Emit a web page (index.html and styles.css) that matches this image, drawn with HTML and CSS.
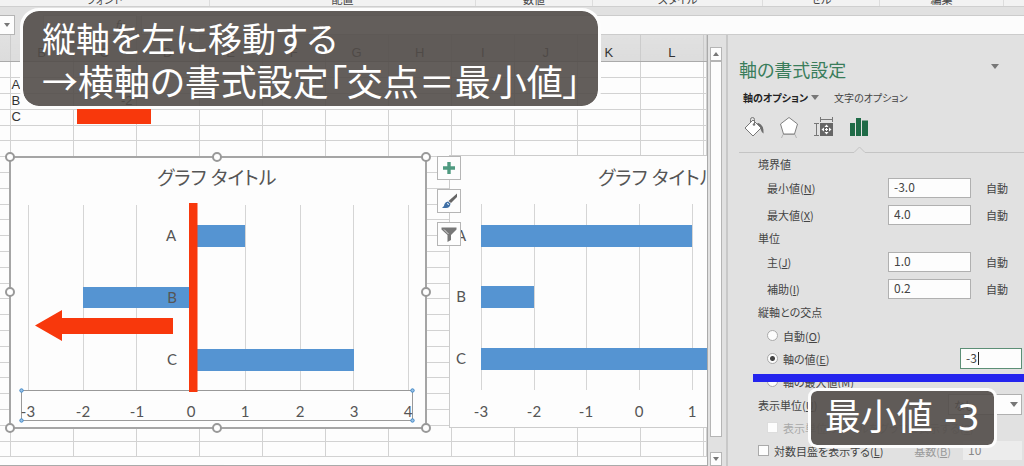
FILE: index.html
```
<!DOCTYPE html>
<html lang="ja">
<head>
    <meta charset="UTF-8">
    <title>軸の書式設定</title>
    <link rel="stylesheet" href="styles.css">
</head>
<body>

<div class="ribbon">
    <span>フォント</span>
    <span>配置</span>
    <span>数値</span>
    <span>スタイル</span>
    <span>セル</span>
    <span>編集</span>
</div>

<div class="formula-bar">
    <button class="name-box" aria-label="名前ボックス"><i class="arrow-down"></i></button>
    <div class="fx-box">fx</div>
    <input class="formula-input" type="text" aria-label="数式バー">
</div>

<div class="workspace">
    <div class="sheet">
        <table class="cells">
            <colgroup id="cols"></colgroup>
            <thead><tr id="head"></tr></thead>
            <tbody id="rows"></tbody>
        </table>
        <div class="red-cell"></div>

        <!-- right chart -->
        <svg class="chart chart-right" width="267" height="285" viewBox="441 150 267 285">
            <rect class="chart-bg" x="449.5" y="155.5" width="300" height="272"/>
            <path class="grid" d="M481.5 204V390M534.5 204V390M586.5 204V390M639.5 204V390M692.5 204V390"/>
            <text class="chart-title" x="598" y="185">グラフ タイトル</text>
            <rect class="bar" x="481" y="225" width="211" height="22"/>
            <rect class="bar" x="481" y="286" width="53" height="22"/>
            <rect class="bar" x="481" y="348" width="240" height="22"/>
            <text x="461" y="241">A</text>
            <text x="461" y="302">B</text>
            <text x="461" y="364">C</text>
            <text x="481" y="417">-3</text>
            <text x="534" y="417">-2</text>
            <text x="586" y="417">-1</text>
            <text x="639" y="417">0</text>
            <text x="692" y="417">1</text>
        </svg>

        <!-- left chart, selected -->
        <svg class="chart chart-left" width="436" height="285" viewBox="0 150 436 285">
            <rect class="chart-bg selected" x="10" y="157" width="416" height="271"/>
            <path class="grid" d="M28.5 205V390M83.5 205V390M136.5 205V390M245.5 205V390M300.5 205V390M353.5 205V390M408.5 205V390"/>
            <text class="chart-title" x="157" y="185">グラフ タイトル</text>
            <rect class="bar" x="193" y="225" width="52" height="22"/>
            <rect class="bar" x="83" y="287" width="110" height="21"/>
            <rect class="bar" x="193" y="349" width="161" height="22"/>
            <text x="171" y="241">A</text>
            <text x="172" y="303">B</text>
            <text x="172" y="365">C</text>
            <rect class="axis-box" x="21.5" y="390.5" width="391" height="30"/>
            <text x="28" y="417">-3</text>
            <text x="83" y="417">-2</text>
            <text x="137" y="417">-1</text>
            <text x="191" y="417">0</text>
            <text x="245" y="417">1</text>
            <text x="300" y="417">2</text>
            <text x="354" y="417">3</text>
            <text x="408" y="417">4</text>
            <g class="axis-handle">
                <circle cx="21.5" cy="390.5" r="1.7"/><circle cx="412.5" cy="390.5" r="1.7"/>
                <circle cx="21.5" cy="420.5" r="1.7"/><circle cx="412.5" cy="420.5" r="1.7"/>
            </g>
            <g class="handle">
                <circle cx="10" cy="157" r="4"/><circle cx="217" cy="157" r="4"/><circle cx="426" cy="157" r="4"/>
                <circle cx="10" cy="292" r="4"/><circle cx="426" cy="292" r="4"/>
                <circle cx="10" cy="428" r="4"/><circle cx="217" cy="428" r="4"/><circle cx="426" cy="428" r="4"/>
            </g>
            <rect class="red" x="189" y="203" width="8.5" height="189"/>
            <path class="red" d="M35 325.5L62 310V318H173V334H62V341Z"/>
        </svg>

        <div class="chart-tools">
            <button aria-label="グラフ要素">
                <svg width="22" height="22"><path d="M11 5V17M5 11H17" stroke="#4f9a80" stroke-width="3.4"/></svg>
            </button>
            <button aria-label="グラフ スタイル">
                <svg width="22" height="22">
                    <path d="M19 3.5V7L13 13L10.500 11Z" fill="#666"/>
                    <path d="M10 11.500L12.500 13.500Q12 18 8 18H4Q6.500 16.500 6.500 14Q7.500 11.500 10 11.500Z" fill="#3f6fa5"/>
                    <path d="M9 13.500L11 14.500" stroke="#fff"/>
                </svg>
            </button>
            <button aria-label="グラフ フィルター">
                <svg width="22" height="22"><path d="M3.500 4.500H18.500V6.500L13 12V17L9.500 19V12L3.500 6.500Z" fill="#777"/><path d="M6 6.500L10.500 11" stroke="#ddd"/></svg>
            </button>
        </div>
        <div class="sheet-tab"></div>
    </div>

    <div class="scrollbar">
        <button aria-label="上へ"><i class="arrow-up"></i></button>
        <div class="thumb"></div>
        <button aria-label="下へ"><i class="arrow-down"></i></button>
    </div>

    <form class="panel">
        <div class="panel-head">
            <h2>軸の書式設定</h2>
            <i class="arrow-down big"></i>
        </div>
        <div class="tabs">
            <b>軸のオプション</b>
            <i class="arrow-down big"></i>
            <span>文字のオプション</span>
        </div>
        <div class="icons">
            <svg width="22" height="22">
                <path d="M15.500 7Q21 9 20.500 17.500Q18.500 16.500 17.500 13L13 8Z" fill="#6d6d6d"/>
                <path d="M10 4L18 12L10 20L2 12Z" fill="#fff" stroke="#777"/>
                <path d="M7.500 7V3.500Q7.500 1.500 9.500 1.500T11.500 3.500V8" fill="none" stroke="#777"/>
                <circle cx="11" cy="8.500" r="1.300" fill="#777"/>
            </svg>
            <svg width="22" height="22">
                <path d="M5 18.500H17L18.500 22M5 18.500L3.500 22" fill="none" stroke="#b5b5b5"/>
                <path d="M11 1.500L19.500 8L16.500 18H5.500L2.500 8Z" fill="#fff" stroke="#808080"/>
            </svg>
            <svg width="22" height="22">
                <path d="M7.500 3.500H19.500M7.500 1V6M19.500 1V6M3.500 7.500V19.500M1 7.500H6M1 19.500H6" stroke="#777" fill="none"/>
                <rect x="7" y="7" width="13" height="13" fill="#666"/>
                <path d="M13.500 8.500L15.500 11H11.500ZM13.500 18.500L15.500 16H11.500ZM8.500 13.500L11 11.500V15.500ZM18.500 13.500L16 11.500V15.500Z" fill="#fff"/>
                <path d="M12 13.500H15M13.500 12V15" stroke="#fff"/>
            </svg>
            <svg width="22" height="22">
                <path d="M2 7H7V20H2ZM8 2H13V20H8ZM14 4.500H20V20H14Z" fill="#1f6b47"/>
            </svg>
        </div>
        <svg class="divider" width="286" height="8"><path d="M0 6.500H115L120.500 1L126 6.500H286" fill="none" stroke="#c4c4c4"/></svg>

        <h3>境界値</h3>
        <div class="field"><label for="min">最小値(<u>N</u>)</label><input id="min" type="text" value="-3.0"><span>自動</span></div>
        <div class="field"><label for="max">最大値(<u>X</u>)</label><input id="max" type="text" value="4.0"><span>自動</span></div>
        <h3>単位</h3>
        <div class="field"><label for="major">主(<u>J</u>)</label><input id="major" type="text" value="1.0"><span>自動</span></div>
        <div class="field"><label for="minor">補助(<u>I</u>)</label><input id="minor" type="text" value="0.2"><span>自動</span></div>
        <h3>縦軸との交点</h3>
        <div class="options">
            <div class="option indent">
                <input type="radio" name="cross" id="auto"><label for="auto">自動(<u>O</u>)</label>
            </div>
            <div class="option indent">
                <input type="radio" name="cross" id="value" checked><label for="value">軸の値(<u>E</u>)</label>
                <span class="cross-value"><input type="text" value="-3" aria-label="軸の値"><i class="caret"></i></span>
            </div>
            <div class="option indent">
                <input type="radio" name="cross" id="maxval"><label for="maxval">軸の最大値(<u>M</u>)</label>
            </div>
            <div class="option">
                <label for="unit">表示単位(<u>U</u>)</label>
                <select id="unit"><option>なし</option></select>
                <i class="arrow-down big select-arrow"></i>
            </div>
            <div class="option indent disabled">
                <input type="checkbox" id="unitlabel" disabled><label for="unitlabel">表示単位のラベルをグラフに表示する(<u>S</u>)</label>
            </div>
            <div class="option">
                <input type="checkbox" id="log"><label for="log">対数目盛を表示する(<u>L</u>)</label>
                <label class="base" for="base">基数(<u>B</u>)</label>
                <input id="base" type="text" value="10" disabled>
            </div>
        </div>

        <div class="blue-line"></div>
        <div class="caption caption-small">最小値 -3</div>
    </form>
</div>

<div class="caption caption-large">
    <div class="first-line">縦軸を左に移動する</div>
    <div>→横軸の書式設定「交点＝最小値」</div>
</div>

<script>
    const letters = ['', 'B', 'C', 'D', 'E', 'F', 'G', 'H', 'I', 'J', 'K', 'L', ''];
    const data = { 1: ['A', '1'], 2: ['B', '-2'], 3: ['C', ''] };
    document.getElementById('cols').innerHTML = letters.map((l, i) =>
        '<col' + (i === 0 ? ' class="first"' : i === 12 ? ' class="last"' : '') + '>').join('');
    document.getElementById('head').innerHTML = letters.map(l => '<th>' + l + '</th>').join('');
    let html = '';
    for (let r = 0; r < 25; r++) {
        const d = data[r] || ['', ''];
        html += '<tr>' + letters.map((l, i) =>
            i === 1 ? '<td>' + d[0] + '</td>' : i === 2 ? '<td class="num">' + d[1] + '</td>' : '<td></td>').join('') + '</tr>';
    }
    document.getElementById('rows').innerHTML = html;
</script>
</body>
</html>
```

FILE: styles.css
```
* {
    box-sizing: border-box;
}
body {
    margin: 0;
    height: 100vh;
    overflow: hidden;
    display: flex;
    flex-direction: column;
    position: relative;
    background: #e1e1e1;
    color: #444;
    font-family: "Noto Sans CJK JP", sans-serif;
    font-size: 11px;
    font-feature-settings: "palt";
}
button {
    padding: 0;
    border: 1px solid #b5b5b5;
    background: #fdfdfd;
    display: flex;
    align-items: center;
    justify-content: center;
}
input, select {
    font: inherit;
    color: inherit;
}
h2, h3 {
    margin: 0;
    font-weight: normal;
}

/* ribbon and formula bar */
.ribbon {
    height: 7px;
    flex: none;
    display: grid;
    grid-template-columns: 210fr 266fr 117fr 170fr 117fr 124fr 20fr;
    grid-template-rows: 6px;
    align-items: end;
    text-align: center;
    line-height: 14px;
    overflow: hidden;
    background: #f2f2f2;
    border-bottom: 1px solid #cfcfcf;
}
.ribbon span {
    border-right: 1px solid #ddd;
}
.formula-bar {
    flex: none;
    height: 28px;
    padding-top: 8px;
    display: flex;
}
.name-box {
    width: 15px;
    border-left: none;
}
.fx-box {
    width: 94px;
    margin: 0 4px 0 28px;
    padding-right: 12px;
    background: #fdfdfd;
    border: 1px solid #ccc;
    text-align: right;
    font-style: italic;
}
.formula-input {
    flex: 1;
    min-width: 0;
    border: 1px solid #ccc;
    border-right: none;
    background: #fcfcfc;
}
.arrow-down {
    border: 3px solid transparent;
    border-top: 4px solid #777;
    border-bottom: none;
}
.arrow-down.big {
    border-width: 5px 4px 0;
}
.arrow-up {
    border: 3px solid transparent;
    border-bottom: 4px solid #777;
    border-top: none;
}

/* sheet */
.workspace {
    flex: 1;
    min-height: 0;
    display: flex;
}
.sheet {
    flex: 1;
    min-width: 0;
    position: relative;
    overflow: hidden;
    background: #fdfdfd;
    border-right: 1px solid #aaa;
    border-bottom: 1px solid #aaa;
}
.cells {
    width: 100%;
    table-layout: fixed;
    border-collapse: collapse;
    font-family: "Liberation Sans", sans-serif;
    font-size: 13px;
    line-height: 14px;
    color: #333;
}
.cells .first {
    width: 10px;
}
.cells .last {
    width: 3px;
}
.cells th {
    height: 26px;
    padding: 11px 0 0;
    font-weight: normal;
    background: linear-gradient(#e1e1e1, #dcdcdc);
    border-bottom: 1px solid #aaa;
    border-right: 1px solid #ccc;
}
.cells td {
    height: 16px;
    padding: 0 2px 0 1px;
    border: 1px solid #d2d2d2;
    border-left: none;
}
.cells tr:nth-child(5n) td {
    height: 15px;
}
.cells .num {
    padding-right: 3px;
    text-align: right;
}
.red-cell {
    position: absolute;
    left: 77px;
    top: 72px;
    width: 74px;
    height: 17px;
    background: #f8380c;
}
.chart {
    position: absolute;
    top: 115px;
    font-family: Lato, "Noto Sans CJK JP", sans-serif;
    font-size: 15px;
    fill: #555;
    text-anchor: middle;
}
.chart-left {
    left: 0;
}
.chart-right {
    left: 441px;
}
.chart-bg {
    fill: #fdfdfd;
    stroke: #ccc;
}
.chart-bg.selected {
    stroke: #a5a5a5;
    stroke-width: 2;
}
.chart-title {
    font-family: "Noto Sans CJK JP", sans-serif;
    font-size: 19px;
    text-anchor: start;
}
.grid {
    stroke: #d5d5d5;
}
.bar {
    fill: #5594d2;
}
.red {
    fill: #f8380c;
}
.axis-box {
    fill: none;
    stroke: #999;
}
.axis-handle {
    fill: #9dc3e6;
    stroke: #4088c8;
}
.handle {
    fill: #fff;
    stroke: #999;
    stroke-width: 2;
}
.chart-tools {
    position: absolute;
    left: 437px;
    top: 121px;
    display: flex;
    flex-direction: column;
    gap: 9px;
}
.chart-tools button {
    width: 24px;
    height: 24px;
}
.sheet-tab {
    position: absolute;
    left: 224px;
    bottom: 0;
    width: 84px;
    height: 1px;
    background: #fff;
}
.scrollbar {
    flex: none;
    width: 20px;
    padding: 12px 4px 0 2px;
    display: flex;
    flex-direction: column;
    border-right: 2px solid #c8c8c8;
}
.scrollbar button {
    height: 14px;
}
.thumb {
    flex: 1;
    margin-bottom: 15px;
    background: #fdfdfd;
    border: 1px solid #b5b5b5;
}

/* format panel */
.panel {
    flex: none;
    width: 296px;
    padding: 20px 2px 0 11px;
    position: relative;
}
.panel-head {
    display: flex;
    justify-content: space-between;
    align-items: center;
    height: 28px;
    padding-right: 23px;
}
.panel-head h2 {
    font-size: 18px;
    color: #3a7d5b;
}
.panel-head .arrow-down {
    margin-bottom: 6px;
}
.tabs {
    display: flex;
    align-items: center;
    height: 28px;
    padding-left: 4px;
    font-size: 10px;
}
.tabs b {
    color: #222;
}
.tabs .arrow-down {
    margin: 0 15px 0 3px;
}
.icons {
    display: flex;
    gap: 13px;
    height: 35px;
    padding: 5px 0 0 4px;
}
.divider {
    display: block;
}
.panel h3 {
    height: 20px;
    line-height: 20px;
    padding-left: 19px;
    font-size: 11px;
}
.field {
    display: flex;
    align-items: center;
    height: 27px;
    padding-left: 28px;
}
.field label {
    width: 121px;
}
.field input {
    width: 83px;
    height: 20px;
    margin-right: 15px;
    padding: 0 5px 2px;
    font-size: 12px;
    border: 1px solid #b0b0b0;
    background: #fdfdfd;
}
.options {
    padding-top: 2px;
}
.option {
    display: flex;
    align-items: center;
    position: relative;
    height: 23px;
    padding-left: 19px;
    white-space: nowrap;
}
.option.indent {
    padding-left: 28px;
}
.option input[type="radio"], .option input[type="checkbox"] {
    appearance: none;
    flex: none;
    width: 11px;
    height: 11px;
    margin: 0 5px 0 0;
    border: 1px solid #aaa;
    background: #fdfdfd;
}
.option input[type="radio"] {
    border-radius: 50%;
}
.option input[type="radio"]:checked {
    background: radial-gradient(circle, #444 2px, #fdfdfd 3px);
}
.cross-value {
    position: relative;
    margin-left: auto;
}
.cross-value input {
    display: block;
    width: 62px;
    height: 21px;
    padding: 0 5px 2px;
    font-size: 12px;
    border: 1px solid #5c8f76;
    background: #fdfdfd;
}
.caret {
    position: absolute;
    left: 18px;
    top: 4px;
    width: 1px;
    height: 13px;
    background: #222;
}
.option select {
    appearance: none;
    width: 74px;
    height: 21px;
    margin-left: auto;
    padding: 0 5px;
    border: 1px solid #b0b0b0;
    background: #fdfdfd;
}
.select-arrow {
    position: absolute;
    right: 4px;
}
.disabled {
    color: #aaa;
}
.option.disabled input {
    border-color: #ddd;
}
.base {
    margin-left: auto;
    margin-right: 12px;
    color: #999;
}
#base {
    width: 59px;
    height: 19px;
    padding: 0 5px 2px;
    font-size: 12px;
    color: #888;
    border: none;
    background: #ececec;
}

/* explanations over the screen */
.blue-line {
    position: absolute;
    left: 25px;
    right: 0;
    top: 339px;
    height: 8px;
    background: #2424ee;
}
.caption {
    position: absolute;
    border: 3px solid #fdfdfd;
    background: rgba(82, 77, 73, 0.9);
    background-clip: padding-box;
    color: #fff;
    font-size: 36px;
    white-space: nowrap;
}
.caption-large {
    left: 20px;
    top: 8px;
    padding: 5px 17px 4px 19px;
    border-radius: 19px;
    line-height: 43px;
}
.first-line {
    font-size: 34px;
}
.caption-small {
    right: 27px;
    top: 353px;
    padding: 0 14px;
    border-radius: 9px;
    font-family: "DejaVu Sans", "Noto Sans CJK JP", sans-serif;
    font-feature-settings: normal;
    line-height: 54px;
}
```
